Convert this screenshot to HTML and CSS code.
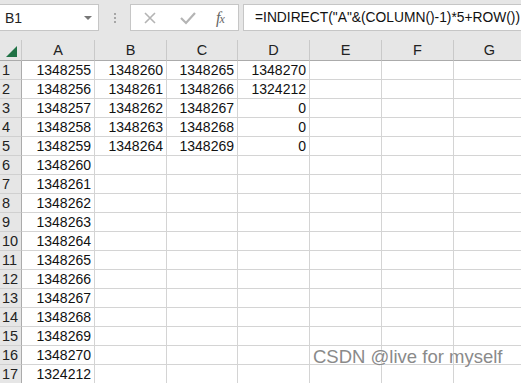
FILE: index.html
```html
<!DOCTYPE html>
<html>
<head>
<meta charset="utf-8">
<link rel="stylesheet" href="styles.css">
</head>
<body>
<div class="app">
  <div class="toolbar">
    <div class="namebox"><span class="ref">B1</span><span class="caret"></span></div>
    <div class="dots"><i></i><i></i><i></i></div>
    <div class="btns">
      <svg class="ico x" width="14" height="14" viewBox="0 0 14 14"><path d="M2 2 L12 12 M12 2 L2 12" stroke="#b4b4b4" stroke-width="1.6" fill="none"/></svg>
      <svg class="ico ok" width="18" height="14" viewBox="0 0 18 14"><path d="M2 7 L7 12 L16 2" stroke="#b4b4b4" stroke-width="2.2" fill="none"/></svg>
      <span class="fx">f<small>x</small></span>
    </div>
    <div class="formula">=INDIRECT("A"&amp;(COLUMN()-1)*5+ROW())</div>
  </div>
  <div class="sheet">
    <div class="corner"><span class="tri"></span></div>
    <div class="ch">A</div><div class="ch">B</div><div class="ch">C</div><div class="ch">D</div><div class="ch">E</div><div class="ch">F</div><div class="ch">G</div>

    <div class="rh">1</div><div class="c">1348255</div><div class="c">1348260</div><div class="c">1348265</div><div class="c">1348270</div><div class="c"></div><div class="c"></div><div class="c"></div>
    <div class="rh">2</div><div class="c">1348256</div><div class="c">1348261</div><div class="c">1348266</div><div class="c">1324212</div><div class="c"></div><div class="c"></div><div class="c"></div>
    <div class="rh">3</div><div class="c">1348257</div><div class="c">1348262</div><div class="c">1348267</div><div class="c">0</div><div class="c"></div><div class="c"></div><div class="c"></div>
    <div class="rh">4</div><div class="c">1348258</div><div class="c">1348263</div><div class="c">1348268</div><div class="c">0</div><div class="c"></div><div class="c"></div><div class="c"></div>
    <div class="rh">5</div><div class="c">1348259</div><div class="c">1348264</div><div class="c">1348269</div><div class="c">0</div><div class="c"></div><div class="c"></div><div class="c"></div>
    <div class="rh">6</div><div class="c">1348260</div><div class="c"></div><div class="c"></div><div class="c"></div><div class="c"></div><div class="c"></div><div class="c"></div>
    <div class="rh">7</div><div class="c">1348261</div><div class="c"></div><div class="c"></div><div class="c"></div><div class="c"></div><div class="c"></div><div class="c"></div>
    <div class="rh">8</div><div class="c">1348262</div><div class="c"></div><div class="c"></div><div class="c"></div><div class="c"></div><div class="c"></div><div class="c"></div>
    <div class="rh">9</div><div class="c">1348263</div><div class="c"></div><div class="c"></div><div class="c"></div><div class="c"></div><div class="c"></div><div class="c"></div>
    <div class="rh">10</div><div class="c">1348264</div><div class="c"></div><div class="c"></div><div class="c"></div><div class="c"></div><div class="c"></div><div class="c"></div>
    <div class="rh">11</div><div class="c">1348265</div><div class="c"></div><div class="c"></div><div class="c"></div><div class="c"></div><div class="c"></div><div class="c"></div>
    <div class="rh">12</div><div class="c">1348266</div><div class="c"></div><div class="c"></div><div class="c"></div><div class="c"></div><div class="c"></div><div class="c"></div>
    <div class="rh">13</div><div class="c">1348267</div><div class="c"></div><div class="c"></div><div class="c"></div><div class="c"></div><div class="c"></div><div class="c"></div>
    <div class="rh">14</div><div class="c">1348268</div><div class="c"></div><div class="c"></div><div class="c"></div><div class="c"></div><div class="c"></div><div class="c"></div>
    <div class="rh">15</div><div class="c">1348269</div><div class="c"></div><div class="c"></div><div class="c"></div><div class="c"></div><div class="c"></div><div class="c"></div>
    <div class="rh">16</div><div class="c">1348270</div><div class="c"></div><div class="c"></div><div class="c"></div><div class="c"></div><div class="c"></div><div class="c"></div>
    <div class="rh">17</div><div class="c">1324212</div><div class="c"></div><div class="c"></div><div class="c"></div><div class="c"></div><div class="c"></div><div class="c"></div>
  </div>
  <div class="watermark">CSDN @live for myself</div>
</div>
</body>
</html>
```

FILE: styles.css
```css
html, body {
  margin: 0;
  padding: 0;
  background: #ffffff;
  overflow: hidden;
}
.app {
  position: relative;
  width: 521px;
  height: 383px;
  overflow: hidden;
  font-family: "Liberation Sans", Arial, sans-serif;
  color: #111;
}
.toolbar {
  height: 40px;
  background: #e6e6e6;
  display: flex;
  align-items: flex-start;
  padding-top: 4px;
  box-sizing: border-box;
}
.namebox {
  flex: 0 0 99px;
  height: 27px;
  box-sizing: border-box;
  background: #fff;
  border: 1px solid #c6c6c6;
  border-left: none;
  display: flex;
  align-items: center;
  padding-left: 5px;
  font-size: 14px;
  color: #222;
}
.ref { flex: 1; }
.caret {
  width: 0; height: 0;
  border-left: 4px solid transparent;
  border-right: 4px solid transparent;
  border-top: 4px solid #777;
  margin-right: 6px;
}
.dots {
  flex: 0 0 31px;
  height: 27px;
  display: flex;
  flex-direction: column;
  align-items: center;
  justify-content: center;
  gap: 2px;
}
.dots i {
  display: block;
  width: 2px;
  height: 2px;
  background: #a6a6a6;
}
.btns {
  flex: 0 0 109px;
  height: 27px;
  box-sizing: border-box;
  background: #fff;
  border: 1px solid #c6c6c6;
  display: flex;
  align-items: center;
  padding-left: 12px;
}
.ico.x { margin-right: 22px; }
.ico.ok { margin-right: 19px; }
.fx {
  font-family: "Liberation Serif", "Times New Roman", serif;
  font-style: italic;
  font-size: 16px;
  color: #666;
  letter-spacing: -1px;
}
.fx small { font-size: 12px; }
.formula {
  margin-left: 4px;
  flex: 1 1 auto;
  min-width: 0;
  overflow: hidden;
  height: 27px;
  box-sizing: border-box;
  background: #fff;
  border: 1px solid #c6c6c6;
  border-right: none;
  font-size: 13.8px;
  line-height: 25px;
  padding-left: 11px;
  color: #111;
  white-space: nowrap;
}
.sheet {
  display: grid;
  grid-template-columns: 22px 73px 72px 71px 72px 72px 72px 72px;
  grid-template-rows: 21px repeat(17, 19px);
  font-size: 14px;
}
.corner, .ch, .rh {
  background: #e6e6e6;
  box-sizing: border-box;
}
.corner {
  position: relative;
  border-right: 1px solid #c9c9c9;
  border-bottom: 1px solid #ababab;
}
.tri {
  position: absolute;
  right: 4px;
  bottom: 3px;
  width: 0; height: 0;
  border-left: 11px solid transparent;
  border-bottom: 11px solid #217346;
}
.ch {
  border-right: 1px solid #c9c9c9;
  border-bottom: 1px solid #ababab;
  text-align: center;
  line-height: 21px;
  color: #222;
  font-size: 14.5px;
}
.rh {
  border-right: 1px solid #ababab;
  border-bottom: 1px solid #d0d0d0;
  padding-left: 2px;
  line-height: 19px;
  font-size: 14.5px;
  color: #222;
}
.c {
  box-sizing: border-box;
  border-right: 1px solid #d4d4d4;
  border-bottom: 1px solid #d4d4d4;
  text-align: right;
  padding-right: 3px;
  line-height: 19px;
  white-space: nowrap;
}
.watermark {
  position: absolute;
  left: 313px;
  top: 346px;
  font-size: 18.5px;
  color: #8a8a8a;
  white-space: nowrap;
  text-shadow: 0 0 1px #fff, 0 0 1px #fff;
}
```
